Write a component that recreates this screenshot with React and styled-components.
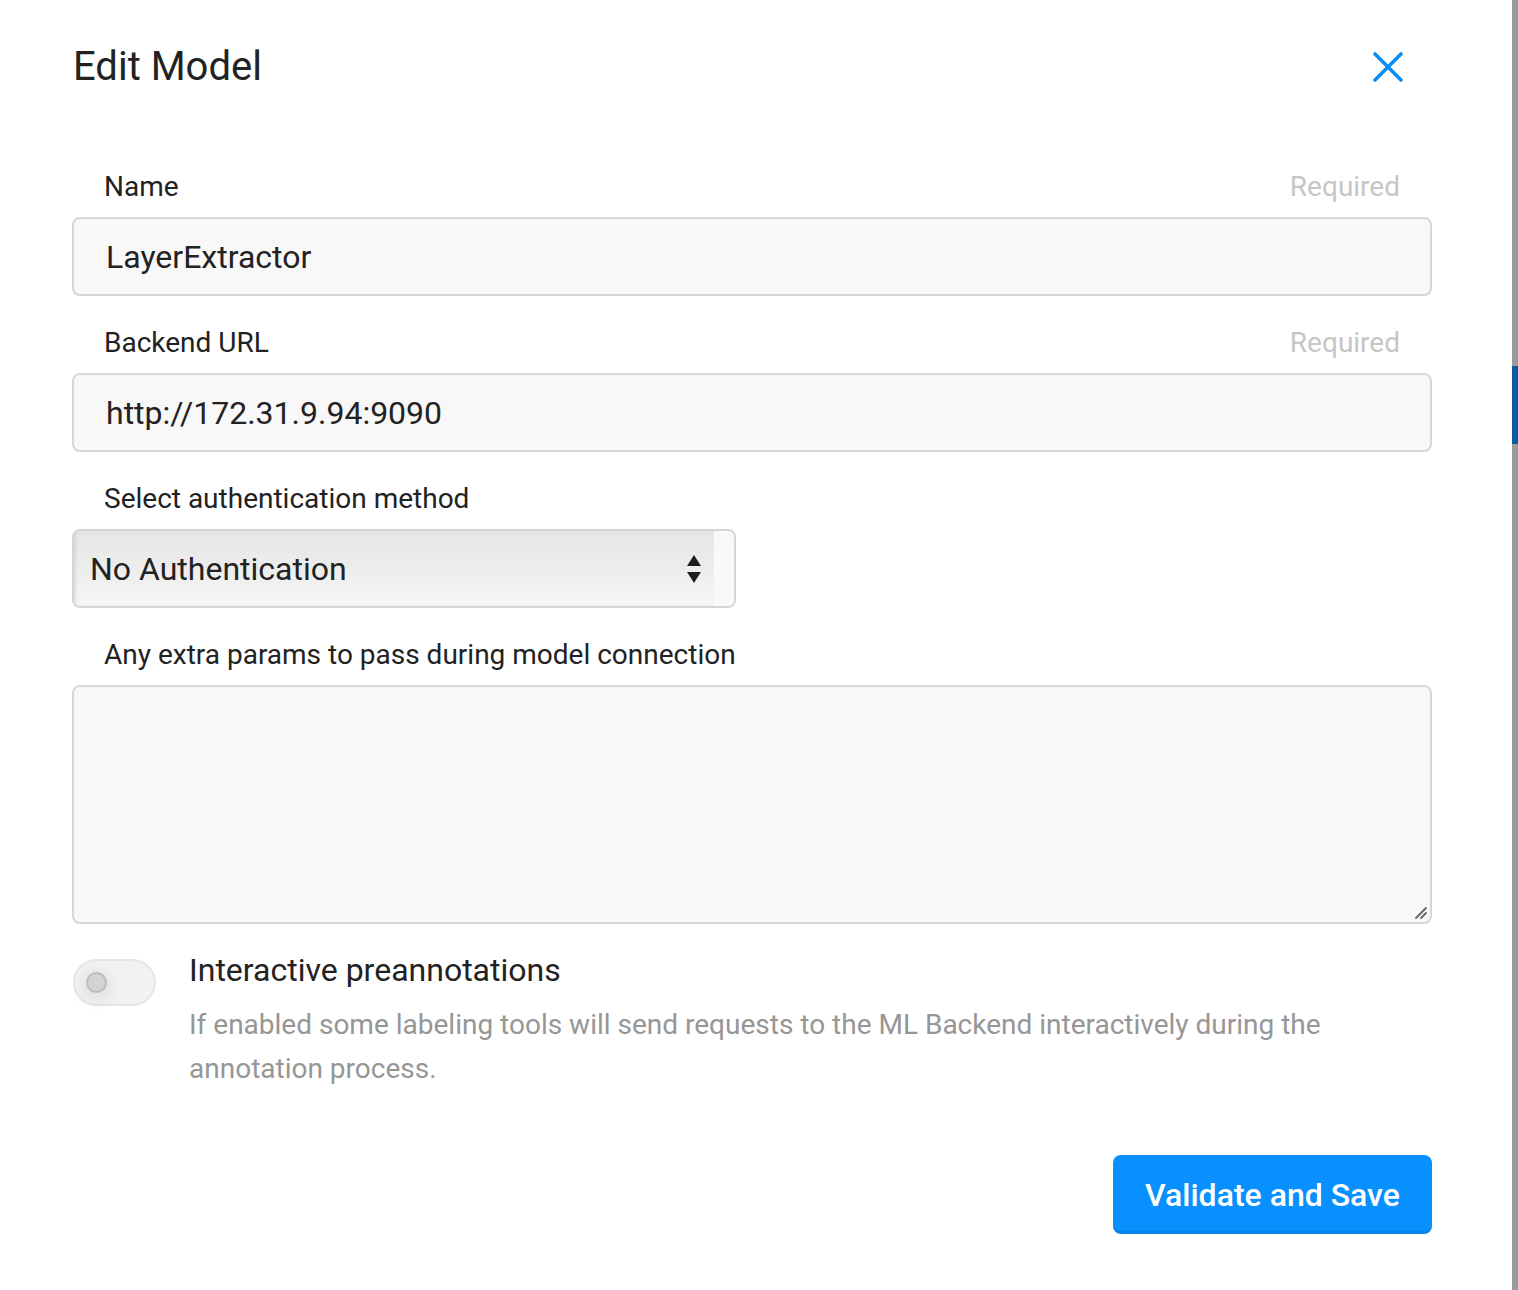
import React from 'react';
import styled, { createGlobalStyle } from 'styled-components';

const Global = createGlobalStyle`
  html, body {
    margin: 0;
    padding: 0;
    background: #ffffff;
    font-family: Roboto, "Liberation Sans", sans-serif;
    color: #222222;
  }
  * { box-sizing: border-box; }
`;

const Page = styled.div`
  display: flex;
  width: 1518px;
  height: 1290px;
  overflow: hidden;
`;

const Panel = styled.div`
  width: 1512px;
  padding: 43px 80px 0 72px;
  background: #ffffff;
`;

const Backdrop = styled.div`
  flex: 1;
  background: #9b9b9b;
  display: flex;
  flex-direction: column;
  padding-top: 366px;
`;

const ScrollThumb = styled.div`
  height: 78px;
  background: #0b5ba1;
`;

const Header = styled.div`
  display: flex;
  align-items: center;
  justify-content: space-between;
  height: 48px;
  padding-right: 28px;
  padding-left: 1px;
`;

const Title = styled.h2`
  margin: 0;
  font-size: 40px;
  font-weight: 400;
  line-height: 48px;
  color: #222222;
`;

const CloseButton = styled.button`
  border: 0;
  background: none;
  padding: 0;
  width: 32px;
  height: 32px;
  display: flex;
  align-items: center;
  justify-content: center;
  cursor: pointer;
`;

const Form = styled.form`
  margin-top: 80px;
  display: flex;
  flex-direction: column;
`;

const Field = styled.div`
  display: flex;
  flex-direction: column;
  margin-bottom: ${p => p.$gap || 31}px;
`;

const LabelRow = styled.div`
  display: flex;
  justify-content: space-between;
  padding: 0 32px;
  height: 46px;
  font-size: 28px;
  line-height: 32px;
`;

const Required = styled.span`
  color: #c6c6c6;
`;

const Input = styled.input`
  width: 100%;
  height: 79px;
  border: 2px solid #d7d7d7;
  border-radius: 8px;
  background: #f8f8f8;
  padding: 0 32px;
  font-family: Roboto, "Liberation Sans", sans-serif;
  font-size: 32px;
  color: #222222;
  outline: none;
`;

const SelectBox = styled.div`
  position: relative;
  display: flex;
  width: 664px;
  height: 79px;
  border: 2px solid #d5d5d5;
  border-radius: 8px;
  overflow: hidden;
  background: #f9f9f9;
`;

const Select = styled.select`
  appearance: none;
  flex: 1;
  border: 0;
  outline: none;
  padding: 0 16px;
  font-family: Roboto, "Liberation Sans", sans-serif;
  font-size: 32px;
  color: #222222;
  background: linear-gradient(180deg, #e6e6e6 0%, #ececec 45%, #f6f6f6 100%);
  box-shadow: inset 3px 0 4px -2px rgba(0, 0, 0, 0.12), 3px 0 4px rgba(0, 0, 0, 0.12);
`;

const SelectTail = styled.div`
  width: 20px;
  background: #f9f9f9;
`;

const Arrows = styled.svg`
  position: absolute;
  left: 611px;
  top: 23px;
  pointer-events: none;
`;

const AreaWrap = styled.div`
  position: relative;
`;

const TextArea = styled.textarea`
  width: 100%;
  height: 239px;
  border: 2px solid #d7d7d7;
  border-radius: 8px;
  background: #f8f8f8;
  padding: 16px 32px;
  font-family: Roboto, "Liberation Sans", sans-serif;
  font-size: 32px;
  outline: none;
  resize: none;
  display: block;
`;

const Grip = styled.svg`
  position: absolute;
  right: 4px;
  bottom: 4px;
  pointer-events: none;
`;

const ToggleRow = styled.div`
  display: flex;
  gap: 33px;
  padding-left: 1px;
`;

const Toggle = styled.div`
  flex: none;
  width: 83px;
  height: 47px;
  margin-top: 9px;
  border-radius: 24px;
  border: 2px solid #e6e6e6;
  background: #f2f2f2;
  display: flex;
  align-items: center;
  padding-left: 11px;
`;

const Knob = styled.div`
  width: 21px;
  height: 21px;
  border-radius: 50%;
  background: #d3d3d3;
  border: 2px solid #bdbdbd;
  box-shadow: 0 4px 14px 6px rgba(0, 0, 0, 0.06);
`;

const ToggleText = styled.div`
  display: flex;
  flex-direction: column;
`;

const ToggleTitle = styled.div`
  font-size: 32px;
  line-height: 40px;
  color: #222222;
`;

const ToggleDesc = styled.div`
  margin-top: 13px;
  font-size: 28px;
  line-height: 44px;
  color: #969696;
  max-width: 1140px;
`;

const Footer = styled.div`
  display: flex;
  justify-content: flex-end;
  margin-top: 64px;
`;

const SaveButton = styled.button`
  width: 319px;
  height: 79px;
  border: 0;
  border-radius: 8px;
  background: #0990ff;
  box-shadow: inset 0 -3px 0 rgba(0, 0, 0, 0.08);
  color: #ffffff;
  font-family: Roboto, "Liberation Sans", sans-serif;
  font-size: 32px;
  font-weight: 500;
  cursor: pointer;
`;

export default function App() {
  return (
    <Page>
      <Global />
      <Panel>
        <Header>
          <Title>Edit Model</Title>
          <CloseButton type="button" aria-label="close">
            <svg width="32" height="32" viewBox="0 0 32 32">
              <path d="M3 3 L29 29 M29 3 L3 29" stroke="#0a8df2" strokeWidth="3.6" strokeLinecap="round" />
            </svg>
          </CloseButton>
        </Header>
        <Form onSubmit={e => e.preventDefault()}>
          <Field>
            <LabelRow>
              <span>Name</span>
              <Required>Required</Required>
            </LabelRow>
            <Input defaultValue="LayerExtractor" />
          </Field>
          <Field>
            <LabelRow>
              <span>Backend URL</span>
              <Required>Required</Required>
            </LabelRow>
            <Input defaultValue="http://172.31.9.94:9090" />
          </Field>
          <Field>
            <LabelRow>
              <span>Select authentication method</span>
            </LabelRow>
            <SelectBox>
              <Select defaultValue="none">
                <option value="none">No Authentication</option>
                <option value="basic">Basic Authentication</option>
              </Select>
              <SelectTail />
              <Arrows width="18" height="30" viewBox="0 0 18 30">
                <path d="M9 1 L16 12 L2 12 Z M2 18 L16 18 L9 29 Z" fill="#1e1e1e" />
              </Arrows>
            </SelectBox>
          </Field>
          <Field $gap={26}>
            <LabelRow>
              <span>Any extra params to pass during model connection</span>
            </LabelRow>
            <AreaWrap>
              <TextArea />
              <Grip width="14" height="14" viewBox="0 0 14 14">
                <path d="M2 12 L12 2 M7 12 L12 7" stroke="#6b6b6b" strokeWidth="2" strokeLinecap="round" />
              </Grip>
            </AreaWrap>
          </Field>
          <ToggleRow>
            <Toggle>
              <Knob />
            </Toggle>
            <ToggleText>
              <ToggleTitle>Interactive preannotations</ToggleTitle>
              <ToggleDesc>
                If enabled some labeling tools will send requests to the ML Backend interactively during the annotation process.
              </ToggleDesc>
            </ToggleText>
          </ToggleRow>
          <Footer>
            <SaveButton type="submit">Validate and Save</SaveButton>
          </Footer>
        </Form>
      </Panel>
      <Backdrop>
        <ScrollThumb />
      </Backdrop>
    </Page>
  );
}
